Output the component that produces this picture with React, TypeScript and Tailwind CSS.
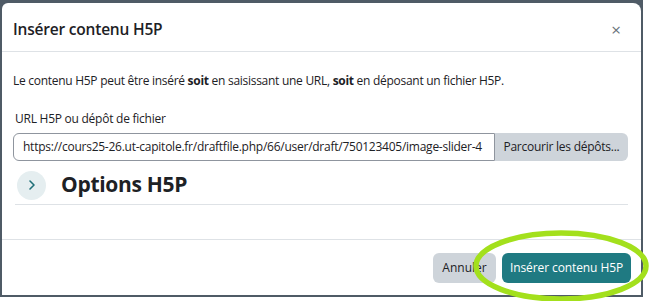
import React from "react";

export default function App() {
  return (
    <div className="relative w-[650px] h-[301px] bg-white overflow-hidden" style={{ fontFamily: '"Open Sans", "Noto Sans", sans-serif' }}>
      <div className="w-[643px] h-[297px] bg-[#4f5b66] pl-[2px] pt-[3px] pr-[2px] pb-[2px]">
        <div className="w-full h-full bg-white rounded-tl-[6px] rounded-tr-[8px] flex flex-col">
          {/* header */}
          <div className="h-[49px] shrink-0 flex items-center justify-between pl-[11px] pr-[20px] pt-[5px] border-b border-[#dee2e6]">
            <h1 className="text-[15.5px] font-semibold text-[#1d2125] tracking-[-0.2px]">Insérer contenu H5P</h1>
            <span className="text-[#6a737b] text-[17px] leading-none">×</span>
          </div>
          {/* body */}
          <div className="flex-1 px-[11px] pt-[20px]">
            <p className="text-[12px] leading-[18px] text-[#1d2125] tracking-[-0.28px]">
              Le contenu H5P peut être inséré <b>soit</b> en saisissant une URL, <b>soit</b> en déposant un fichier H5P.
            </p>
            <label className="block mt-[20px] ml-[2px] text-[12px] leading-[18px] text-[#1d2125] tracking-[-0.25px]">URL H5P ou dépôt de fichier</label>
            <div className="mt-[5px] flex h-[28px] w-[615px]">
              <div className="flex-1 border border-[#8f959e] rounded-l-[6px] flex items-center px-[9px] text-[12px] text-[#1d2125] tracking-[-0.25px] whitespace-nowrap overflow-hidden">
                https://cours25-26.ut-capitole.fr/draftfile.php/66/user/draft/750123405/image-slider-4
              </div>
              <div className="w-[133px] bg-[#ced4da] rounded-r-[6px] flex items-center justify-center text-[12px] text-[#1d2125] tracking-[-0.25px] whitespace-nowrap">
                Parcourir les dépôts...
              </div>
            </div>
            <div className="mt-[9px] flex items-center h-[30px] ml-[4px]">
              <div className="w-[29px] h-[29px] rounded-full bg-[#e5eef0] flex items-center justify-center">
                <svg width="10" height="12" viewBox="0 0 10 12">
                  <path d="M3 2 L7 6 L3 10" fill="none" stroke="#1f6f78" strokeWidth="1.6" strokeLinecap="round" strokeLinejoin="round" />
                </svg>
              </div>
              <span className="ml-[15px] text-[21px] font-bold text-[#1d2125] tracking-[-0.3px]">Options H5P</span>
            </div>
            <div className="mt-[4px] ml-[2px] w-[613px] border-t border-[#dee2e6]" />
          </div>
          {/* footer */}
          <div className="h-[56px] shrink-0 border-t border-[#dee2e6] flex items-center justify-end gap-[6px] pr-[10px] pt-[1px]">
            <div className="h-[30px] w-[63px] rounded-[6px] bg-[#ced4da] flex items-center justify-center text-[12px] text-[#1d2125]">Annuler</div>
            <div className="h-[30px] w-[129px] rounded-[6px] bg-[#1f7a82] flex items-center justify-center text-[12px] text-white tracking-[-0.1px]">Insérer contenu H5P</div>
          </div>
        </div>
      </div>
      <svg className="absolute left-0 top-0 pointer-events-none" width="650" height="301">
        <ellipse cx="561" cy="266" rx="85" ry="33" fill="none" stroke="#a3e01c" strokeWidth="5.5" />
      </svg>
    </div>
  );
}
